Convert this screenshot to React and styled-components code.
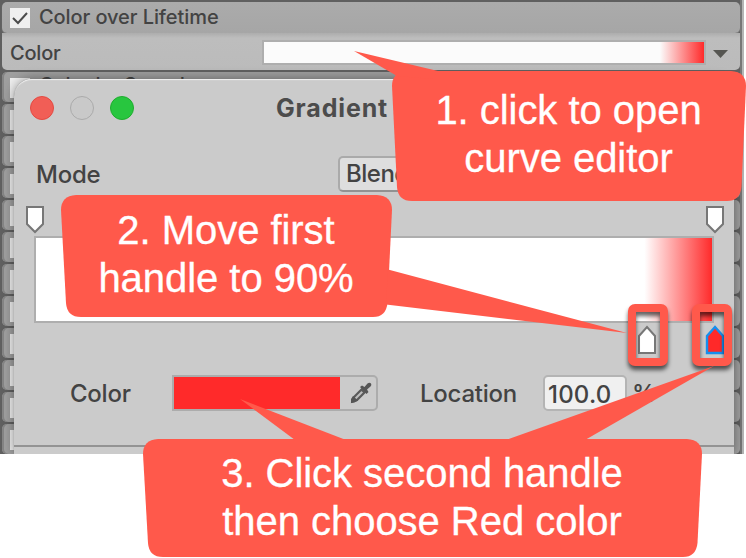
import React from "react";
import styled, { createGlobalStyle } from "styled-components";

const Global = createGlobalStyle`
  * { box-sizing: border-box; }
  body { margin: 0; background: #fff; overflow: hidden; }
`;

const Stage = styled.main`
  position: relative;
  width: 746px;
  height: 558px;
  overflow: hidden;
  font-family: Inter, "Liberation Sans", sans-serif;
  color: #434343;
`;

const Inspector = styled.section`
  width: 744px;
  height: 454px;
  padding: 2px 4px 0 2px;
  overflow: hidden;
  background: linear-gradient(to right, #606060 740px, #777 740px, #777 742px, #b5b5b5 742px);
`;

const ModuleHeader = styled.div`
  display: flex;
  align-items: flex-start;
  gap: 9px;
  height: ${(p) => (p.$open ? 31 : 30)}px;
  margin-bottom: ${(p) => (p.$open ? 0 : 2)}px;
  padding: 6px 8px;
  border-radius: 5px;
  background: ${(p) => (p.$open ? "linear-gradient(#ababab, #a6a6a6)" : "#9f9f9f")};
  box-shadow: ${(p) => (p.$open ? "0 1px 1px #858585" : "inset 2px 0 #858585")};
`;

const CheckBox = styled.span`
  display: flex;
  width: 20px;
  height: 20px;
  flex: none;
  background: #efefef;
`;

const ModuleName = styled.span`
  margin-top: ${(p) => (p.$open ? -3 : -5)}px;
  font-size: 20px;
  line-height: 24px;
  font-weight: 500;
  letter-spacing: -0.08px;
  white-space: nowrap;
`;

const ColorRow = styled.div`
  display: flex;
  align-items: center;
  height: 37px;
  margin-bottom: 2px;
  padding: 2px 9px 0 8px;
  border-radius: 0 0 5px 5px;
  background: linear-gradient(#adadad, #bdbdbd 5px, #bbb);
`;

const RowName = styled.span`
  width: 252px;
  padding-top: 1px;
  font-size: 20px;
  font-weight: 500;
  letter-spacing: -0.2px;
`;

const Ramp = styled.div`
  width: ${(p) => p.$width}px;
  height: ${(p) => p.$height}px;
  flex: none;
  border: 2px solid #aeaeae;
  background: linear-gradient(to right, ${(p) => p.$from} 90%, #ff2a2a 100%);
`;

const Window = styled.section`
  position: absolute;
  left: 14px;
  top: 79px;
  width: 720px;
  height: 375px;
  border-radius: 18px 18px 0 0;
  background: #cbcbcb;
  box-shadow: inset 0 2px 1px -1px #f2f2f2, 0 0 1px #777, 0 0 12px rgba(0, 0, 0, 0.4);
  clip-path: inset(-14px -10px 0 -14px);
  overflow: hidden;
`;

const TitleBar = styled.header`
  display: grid;
  grid-template-columns: 246px 1fr;
  align-items: center;
  height: 58px;
  padding-left: 16px;
`;

const Lights = styled.div`
  display: flex;
  gap: 16px;
`;

const Light = styled.i`
  width: 24px;
  height: 24px;
  border-radius: 50%;
  border: 1px solid ${(p) => p.$edge};
  background: ${(p) => p.$fill};
`;

const Title = styled.h1`
  margin: 0;
  font-size: 25px;
  line-height: 30px;
  font-weight: 700;
  letter-spacing: 0.85px;
  color: #4c4c4c;
`;

const ModeRow = styled.div`
  display: flex;
  align-items: center;
  height: 36px;
  margin-top: 19px;
  padding-left: 22px;
`;

const Label = styled.label`
  width: ${(p) => p.$width}px;
  padding-top: 2px;
  font-size: 24px;
  line-height: 30px;
  font-weight: 500;
  letter-spacing: -0.25px;
`;

const SelectBox = styled.div`
  width: 260px;
  height: 36px;
  margin-left: 1px;
  padding-left: 6px;
  border: 2px solid #aaa;
  border-bottom-color: #929292;
  border-radius: 5px;
  background: #dedede;
  font-size: 24px;
  font-weight: 500;
  line-height: 31px;
  letter-spacing: -0.5px;
`;

const Stops = styled.div`
  display: flex;
  justify-content: ${(p) => (p.$end ? "flex-end" : "space-between")};
  gap: 48px;
  height: 30px;
  margin-top: ${(p) => (p.$end ? 2 : 13)}px;
  padding: 0 9px 0 11px;
`;

const RampWrap = styled.div`
  padding-left: 20px;
  margin-top: 1px;
`;

const ColorFields = styled.div`
  display: flex;
  align-items: center;
  height: 36px;
  margin-top: 20px;
  padding-left: 56px;
`;

const Swatch = styled.div`
  display: flex;
  align-items: center;
  gap: 10px;
  width: 206px;
  height: 36px;
  margin-right: 42px;
  border: 2px solid #acacac;
  border-radius: 0 5px 5px 0;
`;

const SwatchFill = styled.span`
  width: 166px;
  height: 32px;
  background: #ff2a2a;
`;

const NumberBox = styled.div`
  width: 84px;
  height: 36px;
  margin-right: 5px;
  padding-left: 3px;
  border: 2px solid #b4b4b4;
  border-radius: 5px;
  background: #f0f0f0;
  font-size: 24px;
  font-weight: 500;
  line-height: 35px;
  letter-spacing: 0.2px;
`;

const Divider = styled.hr`
  height: 2px;
  margin: 34px 0 0;
  border: 0;
  background: #939393;
`;

const HandleFrame = styled.div`
  position: absolute;
  left: ${(p) => p.$x}px;
  top: 304px;
  width: 40px;
  height: 62px;
  border: 8px solid #ff594b;
  border-radius: 7px;
  filter: drop-shadow(0 4px 2px rgba(0, 0, 0, 0.62));
`;

const CalloutBox = styled.aside`
  position: absolute;
  left: ${(p) => p.$x}px;
  top: ${(p) => p.$y}px;
  width: ${(p) => p.$w}px;
  padding-top: ${(p) => p.$pad}px;
  text-align: center;
  white-space: pre;
  color: #fff;
  font: 40px/48px "Liberation Sans", Arial, sans-serif;
  letter-spacing: -0.04px;
  -webkit-text-stroke: 0.3px #fff;
`;

const Balloon = styled.svg`
  position: absolute;
  left: 0;
  top: 0;
  overflow: visible;
`;

const CalloutText = styled.div`
  position: relative;
  padding-right: 1px;
`;

const Overlay = styled.div`
  position: absolute;
  inset: 0;
`;

function Handle({ up, selected }) {
  return (
    <svg width="20" height="30" viewBox="0 0 20 30">
      <path
        d={up ? "M2 28V11L10 2L18 11V28Z" : "M2 2H18V19L10 27L2 19Z"}
        fill={selected ? "#ff2929" : "#fff"}
        stroke={selected ? "#168fee" : "#777"}
        strokeWidth={selected ? 2.4 : 2}
      />
    </svg>
  );
}

function Eyedropper() {
  return (
    <svg width="22" height="22" viewBox="0 0 22 22">
      <path d="M11.5 7.5L4 15L2.5 19.5L7 18L14.5 10.5Z" fill="#bdbdbd" stroke="#5a5a5a" strokeWidth="2.2" />
      <path d="M10 5L12 3.5L14.5 5L17.5 1.5Q19.5 0 21 1.5Q22 3 20.5 4.5L17 7.5L18.5 10L16.5 12Z" fill="#555" />
      <path d="M1 21V17L3 14L8 18.5L4.500 20.500Z" fill="#555" />
    </svg>
  );
}

function Callout({ x, y, w, h, pad, tails, children }) {
  const body = `M15 0H${w - 15}Q${w} 1 ${w} 15L${w - 4.5} ${h - 14}Q${w - 6} ${h} ${w - 19} ${h}H20Q6 ${h} 5 ${h - 14}L0 15Q0 1 15 0Z`;
  return (
    <CalloutBox $x={x} $y={y} $w={w} $pad={pad}>
      <Balloon width={w} height={h}>
        <path d={body} fill="#ff594b" />
        {tails.map((t) => (
          <polygon key={t} points={t} fill="#ff594b" />
        ))}
      </Balloon>
      <CalloutText>{children}</CalloutText>
    </CalloutBox>
  );
}

const modules = ["Color by Speed", ...Array(11).fill("")];

export default function App() {
  return (
    <Stage>
      <Global />
      <Inspector>
        <ModuleHeader $open>
          <CheckBox>
            <svg width="20" height="20">
              <path d="M3 10L8 15L17 5" fill="none" stroke="#4b4b4b" strokeWidth="2" />
            </svg>
          </CheckBox>
          <ModuleName $open>Color over Lifetime</ModuleName>
        </ModuleHeader>
        <ColorRow>
          <RowName>Color</RowName>
          <Ramp $width={444} $height={25} $from="#fbfbfb" />
          <svg width="24" height="20">
            <path d="M7 7H22L14.5 15Z" fill="#565652" />
          </svg>
        </ColorRow>
        {modules.map((name, i) => (
          <ModuleHeader key={i}>
            <CheckBox />
            <ModuleName>{name}</ModuleName>
          </ModuleHeader>
        ))}
      </Inspector>

      <Window>
        <TitleBar>
          <Lights>
            <Light $fill="#f15e56" $edge="#e34a42" />
            <Light $fill="#c9c9c9" $edge="#aaa" />
            <Light $fill="#28c63f" $edge="#1fad2e" />
          </Lights>
          <Title>Gradient</Title>
        </TitleBar>
        <ModeRow>
          <Label $width={301}>Mode</Label>
          <SelectBox>Blend</SelectBox>
        </ModeRow>
        <Stops>
          <Handle />
          <Handle />
        </Stops>
        <RampWrap>
          <Ramp $width={680} $height={87} $from="#fff" />
        </RampWrap>
        <Stops $end>
          <Handle up />
          <Handle up selected />
        </Stops>
        <ColorFields>
          <Label $width={102}>Color</Label>
          <Swatch>
            <SwatchFill />
            <Eyedropper />
          </Swatch>
          <Label $width={123}>Location</Label>
          <NumberBox>100.0</NumberBox>
          <Label $width={30}>%</Label>
        </ColorFields>
        <Divider />
      </Window>

      <Overlay>
        <HandleFrame $x={628} />
        <HandleFrame $x={692} />
        <Callout x={392} y={71} w={354} h={130} pad={15} tails={["-38,-20 46,0 40,8 5,5"]}>
          {"1. click to open\ncurve editor"}
        </Callout>
        <Callout x={61} y={195} w={331} h={122} pad={11} tails={["327,74.5 566,138 325,109.5"]}>
          {"2. Move first\nhandle to 90%"}
        </Callout>
        <Callout
          x={143}
          y={439}
          w={559}
          h={118}
          pad={10}
          tails={["97,-40 203,1 152,1", "571,-73 363,1 442,1"]}
        >
          {"3. Click second handle\nthen choose Red color"}
        </Callout>
      </Overlay>
    </Stage>
  );
}
